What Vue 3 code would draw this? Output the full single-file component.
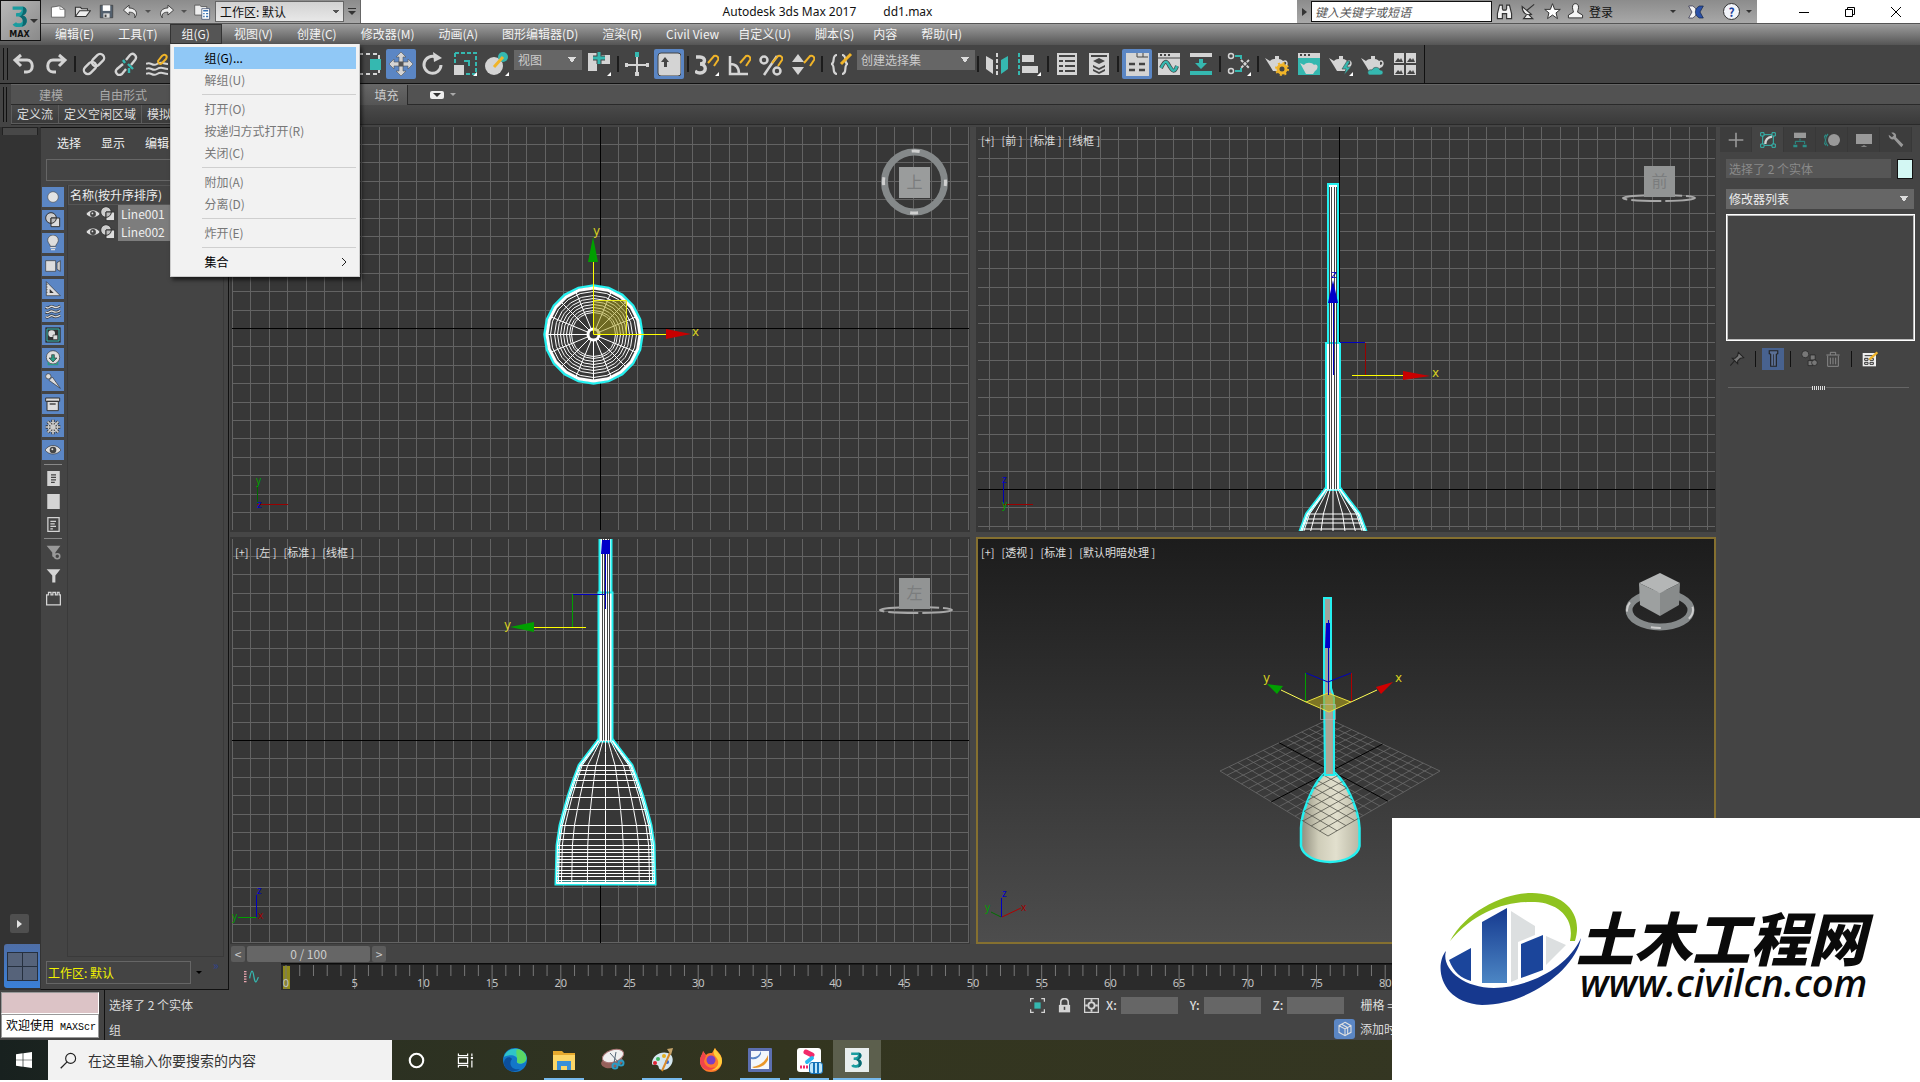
<script setup>
import { h, ref } from 'vue'

const L = '#d4d4d4'
const T = '#35b8b0'
const Y = '#f0b429'
const magnet = `<path d="M13 11l6-7a3 3 0 0 1 4 4l-4 6" fill="none" stroke="${Y}" stroke-width="2"/>`
const teapot = `<path d="M0 6l5 3c2-3 11-3 13 0 5-3 7 5 1 7l-3 3H8L5 14z" fill="${L}"/><path d="M10 4h4v3h-4z" fill="${L}"/><path d="M19 10c3-1 3 3 0 3z" fill="#444"/>`
const corner = `<path d="M24 20v4h-4z" fill="#fff"/>`

const icons = {
  undo: `<path d="M9 3L3 8l6 6M4 8h11c7 0 7 12 0 12h-3" fill="none" stroke="${L}" stroke-width="3"/>`,
  redo: `<path d="M15 3l6 5-6 6M20 8H9c-7 0-7 12 0 12h3" fill="none" stroke="${L}" stroke-width="3"/>`,
  link: `<g fill="none" stroke="${L}" stroke-width="2.4"><rect x="9" y="4" width="14" height="8" rx="4" transform="rotate(-45 16 8)"/><rect x="1" y="12" width="14" height="8" rx="4" transform="rotate(-45 8 16)"/></g>`,
  unlink: `<g fill="none" stroke="${L}" stroke-width="2.4"><path d="M12 8l4-5c3-3 8 1 5 5l-4 5M9 12l-6 5c-3 3 1 8 5 5l4-5"/><path d="M9 8l2 3M14 12l5 5M15 16v5" stroke="${T}"/></g>`,
  bind: `<path d="M0 12c5-3 6 3 11 0s6 0 11 0M0 17c5-3 6 3 11 0s6 0 11 0M0 22c5-3 6 3 11 0s6 0 11 0" fill="none" stroke="${L}" stroke-width="2"/><path d="M12 9l4-5c3-3 6 0 4 3l-4 4c-2 2-4 0-4-2z" fill="none" stroke="${Y}" stroke-width="2"/>`,
  windowSel: `<path d="M2 2h20v20H2z" fill="none" stroke="${L}" stroke-width="2" stroke-dasharray="4 3"/><path d="M13 7h11v11H13z" fill="${T}"/>`,
  move: `<path d="M12 0l5 5h-3v5h5V7l5 5-5 5v-3h-5v5h3l-5 5-5-5h3v-5H5v3l-5-5 5-5v3h5V5H7z" fill="${L}" stroke="#555" stroke-width=".6"/><rect x="9.5" y="9.5" width="5" height="5" fill="#555"/>`,
  rotate: `<path d="M15 5a8.500 8.500 0 1 0 5 8" fill="none" stroke="${L}" stroke-width="3"/><path d="M12 0l9 6-8 4z" fill="${L}"/>`,
  scale: `<path d="M2 1h21v21H12M2 1v11" fill="none" stroke="${T}" stroke-width="2" stroke-dasharray="4 2"/><path d="M11 9h5v5" fill="none" stroke="${T}" stroke-width="2"/><path d="M1 13h10v10H1z" fill="${L}"/>${corner}`,
  place: `<ellipse cx="9" cy="14" rx="9" ry="9" fill="${L}"/><circle cx="18" cy="5" r="5" fill="${T}"/><path d="M9 15l9-10" stroke="${Y}" stroke-width="3"/>${corner}`,
  pivot: `<path d="M1 1h9v18H1zM12 3h11v9H12z" fill="${L}"/><path d="M12 0v12M6 6h12" stroke="#444" stroke-width="5"/><path d="M12 0v12M6 6h12" stroke="${T}" stroke-width="3"/>${corner}`,
  manip: `<path d="M12 3v20M1 13h22" stroke="${L}" stroke-width="2"/><path d="M10 0h4v5h-4z" fill="${T}"/><path d="M0 11h3v4H0zM21 11h3v4h-3zM10 20h4v4h-4z" fill="${L}"/>`,
  keyboard: `<rect x="1" y="1" width="23" height="23" rx="3" fill="${L}" stroke="#444"/><path d="M8 5l4 5h-2v5H7v-5H4z" fill="#444"/>`,
  snap: `<path d="M1 5h4c6 0 6 7 0 7 7 0 7 9 0 9-2 0-4-1-5-2" fill="none" stroke="${L}" stroke-width="3.4"/>${magnet}${corner}`,
  angle: `<path d="M3 4v18h18M3 12c6 0 9 4 9 10" fill="none" stroke="${L}" stroke-width="2.5"/>${magnet}`,
  percent: `<g fill="none" stroke="${L}" stroke-width="2.5"><circle cx="5" cy="8" r="3.5"/><circle cx="18" cy="19" r="3.5"/><path d="M18 4L5 23"/></g>${magnet}`,
  spinner: `<path d="M7 2l6 8H1zM7 23l6-8H1z" fill="${L}"/>${magnet}`,
  named: `<path d="M8 3c-6 0-1 9-6 9 5 0 0 10 6 10M13 3c6 0 1 9 6 9-5 0 0 10-6 10" fill="none" stroke="${L}" stroke-width="2.2"/><path d="M12 12L22 2" stroke="${Y}" stroke-width="3"/>`,
  mirror: `<path d="M1 4l7 4v14l-7-5z" fill="${L}"/><path d="M23 4l-7 4v14l7-5z" fill="${T}"/><path d="M12 1v23" stroke="${L}" stroke-width="2" stroke-dasharray="4 2"/>`,
  align: `<path d="M2 1v23" stroke="${T}" stroke-width="2" stroke-dasharray="4 2"/><path d="M5 3h12v7H5zM5 14h16v7H5z" fill="${L}"/>${corner}`,
  layers: `<path d="M2 1h20v22H2z" fill="${L}"/><path d="M4 4h16M4 9h4M10 9h10M4 14h4M10 14h10M4 19h4M10 19h10" stroke="#444" stroke-width="2"/>`,
  stack: `<path d="M2 1h20v22H2z" fill="${L}"/><path d="M4 4h16" stroke="#444" stroke-width="2"/><path d="M6 9l6-3 6 3-6 3zM6 13l6 3 6-3v2l-6 3-6-3zM6 17l6 3 6-3v2l-6 3-6-3z" fill="#444"/>`,
  ribbon: `<path d="M1 1h23v23H1z" fill="${L}"/><path d="M12 1v4h11M18 1v4" stroke="#444" fill="none"/><path d="M4 12h6M14 12h6M4 18h6M14 18h6" stroke="#444" stroke-width="2.5"/>`,
  curve: `<path d="M1 1h22v22H1z" fill="${L}"/><path d="M1 6h22" stroke="#444"/><path d="M3 3h2M7 3h2M11 3h2" stroke="#444" stroke-width="2"/><path d="M4 16c5-10 6-6 9-1s5 5 7-1" fill="none" stroke="#444" stroke-width="4"/><path d="M4 16c5-10 6-6 9-1s5 5 7-1" fill="none" stroke="${T}" stroke-width="2.5"/>`,
  dope: `<path d="M1 1h22v4H1z" fill="${L}"/><path d="M1 19h22v4H1z" fill="${T}"/><path d="M10 7h4v4h4l-6 6-6-6h4z" fill="${T}"/>`,
  schematic: `<g fill="none" stroke="${L}" stroke-width="1.5"><circle cx="4" cy="4" r="2.5"/><circle cx="4" cy="19" r="2.5"/></g><path d="M8 4h6v3M8 19h6v-3" fill="none" stroke="${T}" stroke-width="2"/><path d="M14 8l8 8M22 8l-8 8" stroke="${L}" stroke-width="2" stroke-dasharray="3 1"/>${corner}`,
  renderSetup: `${teapot}<circle cx="17" cy="17" r="4" fill="#444" stroke="${Y}" stroke-width="3"/><circle cx="17" cy="17" r="6" fill="none" stroke="${Y}" stroke-width="2" stroke-dasharray="2 2.7"/>`,
  frame: `<path d="M1 1h22v22H1z" fill="${T}"/><path d="M1 1h22v5H1z" fill="${L}"/><path d="M3 3h2M7 3h2M11 3h2" stroke="#444" stroke-width="2"/><path d="M3 11l4 2c2-3 8-3 10 0 4-2 5 4 1 6l-2 3H9z" fill="${L}"/>`,
  render: `${teapot}<path d="M18 9l-5 8h4l-2 6 7-8h-4l3-6z" fill="${T}" stroke="#444" stroke-width=".6"/>${corner}`,
  cloud: `${teapot}<path d="M8 23c-3-3 0-6 3-5 2-4 7-3 8 0 4 0 4 5 0 5z" fill="${T}" stroke="#444" stroke-width=".6"/>`,
  gallery: `<path d="M1 1h10v10H1zM13 1h10v10H13zM1 13h10v10H1zM13 13h10v10H13z" fill="${L}"/><path d="M2 10l3-4 2 2 1-2 2 4zM14 10l3-4 2 2 1-2 2 4zM2 22l3-4 2 2 1-2 2 4zM14 22l3-4 2 2 1-2 2 4z" fill="#444"/>`,
  file: `<path d="M2 6l12-2 7 5v11H2z" fill="#fff" stroke="#444"/><path d="M14 4v5h7" fill="none" stroke="#777"/>`,
  open: `<path d="M2 19V6h7l2 2h8v3" fill="#ddd" stroke="#333" stroke-width="1.5"/><path d="M2 19l6-8h15l-6 8z" fill="#eee" stroke="#333" stroke-width="1.5"/>`,
  save: `<path d="M2 2h20v20H2z" fill="#53606e" stroke="#333"/><path d="M6 2h12v9H6z" fill="#fff"/><path d="M7 15h10v7H7z" fill="#ddd"/><path d="M9 17h3v4H9z" fill="#444"/>`,
  back: `<path d="M10 3L2 10l8 7v-4c5 0 9 1 8 8 6-8 0-14-8-14z" fill="#eee" stroke="#333" stroke-width="1.2"/>`,
  fwd: `<path d="M14 3l8 7-8 7v-4c-5 0-9 1-8 8-6-8 0-14 8-14z" fill="#eee" stroke="#333" stroke-width="1.2"/>`,
  project: `<path d="M1 3h7l2 2h8v12H1z" fill="#eee" stroke="#444"/><path d="M11 8h11v15H11z" fill="#fff" stroke="#346"/><path d="M13 11h7M13 15h2M17 15h3M13 19h2M17 19h3" stroke="#3471b5" stroke-width="2"/>`,
  bino: `<path d="M5 3h4v5l1 2h4l1-2V3h4l3 12v7h-7v-7h-6v7H2v-7z" fill="#f2f2f2" stroke="#333" stroke-width="1.6"/>`,
  dish: `<path d="M3 5c0 9 6 13 13 11zM9 11l11-9M9 17l-4 5h13l-5-5" fill="#f2f2f2" stroke="#333" stroke-width="1.6"/>`,
  star: `<path d="M12 1l3 8h8l-6 5 2 8-7-5-7 5 2-8-6-5h8z" fill="#fff" stroke="#333" stroke-width="1.4"/>`,
  user: `<path d="M8 4c1-4 7-4 8 0 1 4-1 6-1 9l7 4v4H2v-4l7-4c0-3-2-5-1-9z" fill="#f5f5f5" stroke="#333" stroke-width="1.4"/>`,
  exchange: `<path d="M1 3h6c4 2 6 6 6 9s-2 7-6 9H1l5-9z" fill="#f5f5f5" stroke="#224"/><path d="M23 3h-6c-4 2-6 6-6 9s2 7 6 9h6l-5-9z" fill="#2a50a8" stroke="#124"/>`,
  geo: `<circle cx="12" cy="12" r="8" fill="#e4e4e4" stroke="#555"/>`,
  shapes: `<circle cx="9" cy="9" r="8" fill="#ccc" stroke="#333" stroke-width="1.5"/><path d="M9 9h13v13H9z" fill="#ddd" stroke="#333" stroke-width="1.5"/><path d="M9 17a8 8 0 0 0 8-8H9z" fill="#bbb" stroke="#333" stroke-width="1.5"/>`,
  bulb: `<path d="M8 17c0-3-4-5-4-9a8 8 0 0 1 16 0c0 4-4 6-4 9z" fill="#ddd" stroke="#444"/><path d="M8 19h8M9 22h6" stroke="#ddd" stroke-width="2"/>`,
  camera: `<path d="M1 4h15v16H1z" fill="#ddd" stroke="#333"/><path d="M18 7l5-3v16l-5-3z" fill="#ccc" stroke="#333"/>`,
  helper: `<path d="M2 1v21h21z" fill="#ddd" stroke="#333"/><path d="M7 12v6h6z" fill="#333"/><path d="M2 5h2M2 9h2M2 13h2M2 17h2" stroke="#333"/>`,
  waves: `<path d="M1 5c5 4 6-4 11-1s6 1 11-1M1 12c5 4 6-4 11-1s6 1 11-1M1 19c5 4 6-4 11-1s6 1 11-1" fill="none" stroke="#333" stroke-width="4"/><path d="M1 5c5 4 6-4 11-1s6 1 11-1M1 12c5 4 6-4 11-1s6 1 11-1M1 19c5 4 6-4 11-1s6 1 11-1" fill="none" stroke="#ddd" stroke-width="2"/>`,
  group: `<path d="M1 1h22v22H1z" fill="#333" stroke="#333"/><path d="M3 3h18v18H3z" fill="none" stroke="${T}" stroke-width="1.5"/><circle cx="10" cy="10" r="5" fill="#ddd"/><path d="M12 12h7v7h-7z" fill="#ddd" stroke="#333"/>`,
  xref: `<circle cx="12" cy="11" r="10" fill="#ddd" stroke="#333"/><path d="M10 7h4v5h4l-6 6-6-6h4z" fill="#2b9c84" stroke="#333"/><path d="M5 18v4h14v-4" fill="none" stroke="#2b9c84" stroke-width="2"/>`,
  bone: `<circle cx="5" cy="5" r="4" fill="#ddd" stroke="#333"/><path d="M6 11l5-5 12 17z" fill="#ddd" stroke="#333"/>`,
  container: `<path d="M1 3h21v5H1zM3 8h17v14H3z" fill="#ddd" stroke="#333" stroke-width="1.5"/><path d="M7 12h9" stroke="#333" stroke-width="2"/>`,
  frozen: `<path d="M12 1v22M1 12h22M4 4l16 16M20 4L4 20" stroke="#333" stroke-width="5"/><path d="M12 1v22M1 12h22M4 4l16 16M20 4L4 20" stroke="#ccc" stroke-width="2.4"/><circle cx="12" cy="12" r="7" fill="none" stroke="#ccc" stroke-width="2"/>`,
  eye: `<path d="M0 12c6-9 18-9 24 0-6 8-18 8-24 0z" fill="#ddd" stroke="#333"/><circle cx="12" cy="12" r="5" fill="#444"/><circle cx="11" cy="11" r="1.5" fill="#ddd"/>`,
  doc: `<path d="M2 0h20v24H2z" fill="${L}"/><path d="M8 6h8M8 10h8M8 14h8M8 18h6" stroke="#444" stroke-width="2"/>`,
  blank: `<path d="M2 0h20v24H2z" fill="${L}"/>`,
  docLine: `<path d="M3 1h18v22H3z" fill="none" stroke="${L}" stroke-width="2"/><path d="M7 7h9M7 11h7M7 15h9M7 19h4" stroke="${L}" stroke-width="2"/>`,
  funnelGear: `<path d="M1 1h22l-8 11v10l-5-4v-6z" fill="#999"/><circle cx="18" cy="18" r="4" fill="#444" stroke="#999" stroke-width="2.5"/>`,
  funnel: `<path d="M1 2h22l-8 10v11h-5V12z" fill="${L}"/>`,
  brick: `<path d="M1 6h3V2h4v4h3V2h4v4h3V2h3v4h2v16H1z" fill="none" stroke="${L}" stroke-width="2"/>`,
  plus: `<path d="M12 1v22M1 12h22" stroke="#999" stroke-width="2.4"/>`,
  modify: `<path d="M4 4h16v16H4z" fill="none" stroke="${T}" stroke-width="1.5"/><path d="M1 1h5v5H1zM18 1h5v5h-5zM1 18h5v5H1zM18 18h5v5h-5z" fill="#444" stroke="${T}" stroke-width="1.5"/><path d="M8 18c0-7 4-10 10-11" fill="none" stroke="${L}" stroke-width="3.5"/>`,
  hierarchy: `<path d="M3 1h18v8H3z" fill="#999"/><path d="M12 10v3M5 18v-4h14v4" fill="none" stroke="#2b8f88" stroke-width="1.5"/><path d="M2 19h6v4H2zM16 19h6v4h-6z" fill="#2b8f88"/>`,
  motion: `<circle cx="15" cy="12" r="9" fill="#999"/><path d="M6 3c-5 5-5 13 0 18M3 4c-5 5-5 11 0 16" fill="none" stroke="#2b8f88" stroke-width="1.6"/>`,
  display: `<path d="M0 3h24v15H0zM7 22l5-2 5 2z" fill="#999"/>`,
  wrench: `<path d="M1 4l5 4 3-3-4-4c6-1 8 3 7 7l11 11-3 4L9 11C5 12 1 9 1 4z" fill="#999"/>`,
  pin: `<path d="M14 2l8 8-5 1-4 4 0 4-8-8h4l4-4zM8 15l-6 7" fill="#777" stroke="#222" stroke-width="1.6"/>`,
  tube: `<path d="M6 1h12v4l-2 1v17H8V6L6 5z" fill="#5a6f95" stroke="#222" stroke-width="1.6"/><path d="M12 6v16" stroke="#222"/>`,
  unique: `<g fill="#777" stroke="#222"><circle cx="6" cy="6" r="5"/><path d="M13 7h7v7h-7zM10 15h7v7h-7z"/><circle cx="19" cy="18" r="4"/></g>`,
  trash: `<path d="M2 6h20M8 6V2h8v4M4 7v16h16V7M8 10v10M12 10v10M16 10v10" fill="none" stroke="#888" stroke-width="1.5"/>`,
  config: `<path d="M1 3h20v20H1z" fill="#eee"/><path d="M4 7h14M4 11h5v3H4zM12 11h5v3h-5zM4 17h5v3H4zM12 17h5v3h-5z" fill="none" stroke="#333" stroke-width="1.5"/><path d="M11 13L23 2" stroke="${Y}" stroke-width="3.5"/>`,
  isolate: `<path d="M1 6V1h5M18 1h5v5M23 18v5h-5M6 23H1v-5" fill="none" stroke="${L}" stroke-width="2"/><path d="M7 7h10v10H7z" fill="${T}"/>`,
  lock: `<path d="M6 11V7c0-8 12-8 12 0v4" fill="none" stroke="${L}" stroke-width="2.5"/><path d="M3 11h18v12H3z" fill="${L}"/><path d="M12 14v5" stroke="#444" stroke-width="2.5"/>`,
  abs: `<path d="M1 1h22v22H1z" fill="none" stroke="${L}" stroke-width="2"/><circle cx="12" cy="12" r="5" fill="none" stroke="${L}" stroke-width="3"/><path d="M12 2v4M12 18v4M2 12h4M18 12h4" stroke="${L}" stroke-width="3"/>`,
  cube: `<path d="M12 2l9 5v10l-9 5-9-5V7zM3 7l9 5 9-5M12 12v10M7 5l9 5v9" fill="none" stroke="#e0e0e0" stroke-width="1.6"/>`,
  miniCurve: `<path d="M2 3v19" stroke="#e9a6b0" stroke-width="4" stroke-dasharray="2 2"/><path d="M9 15c3-16 5-14 7-2s4 8 7 0" fill="none" stroke="${T}" stroke-width="2"/>`,
  win: `<path d="M0 3.5l10-1.5v9.5H0zM11 2l13-2v11.5H11zM0 12.5h10V22L0 20.5zM11 12.5h13V24l-13-2z" fill="#fff"/>`,
  search: `<circle cx="15" cy="9" r="7" fill="none" stroke="#222" stroke-width="1.6"/><path d="M10 14l-9 9" stroke="#222" stroke-width="1.8"/>`,
  cortana: `<circle cx="12" cy="12" r="9.5" fill="none" stroke="#fff" stroke-width="3"/>`,
  taskview: `<path d="M2 2v3h13V2M2 22v-3h13v3M2 8h13v8H2zM21 2v4M21 12v10" fill="none" stroke="#fff" stroke-width="1.7"/><path d="M19.5 7h3v3h-3z" fill="#fff"/>`,
  edge: `<circle cx="12" cy="12" r="12" fill="#1377c9"/><path d="M1 9C3 1 12-1 18 2c6 3 7 9 4 12-3 3-9 2-8-1 2-5-6-8-13-4z" fill="#2fc4c9"/><path d="M14 1c7 1 10 7 9 11-2 5-10 4-9 1 1-4-2-8 0-12z" fill="#5bd864"/><path d="M9 11c-4 5 0 12 8 10-6 5-17 1-16-7 1-5 6-6 8-3z" fill="#0c4f9c"/>`,
  folder: `<path d="M1 3h9l2 2h11v17H1z" fill="#e6a92e"/><path d="M1 7h22v15H1z" fill="#fcd667"/><path d="M5 22v-9h14v9h-4v-4H9v4z" fill="#3a8fd9"/>`,
  snip: `<ellipse cx="11" cy="14" rx="11" ry="6" fill="#96605a" transform="rotate(-12 11 14)"/><ellipse cx="12" cy="8" rx="11" ry="6" fill="#f0f0f0" stroke="#a77" transform="rotate(-18 12 8)"/><path d="M9 5l9 10M15 4l-2 11" stroke="#567"/><g fill="none" stroke="#2b9bc4" stroke-width="2"><circle cx="14" cy="18" r="2.5"/><circle cx="20" cy="15" r="2.5"/></g>`,
  paint: `<path d="M2 15C2 7 14 1 21 7c5 6-2 16-9 15-5-1-2-4-5-5s-5 1-5-2z" fill="#d5e7f0"/><circle cx="8" cy="11" r="2" fill="#3db45e"/><circle cx="14" cy="8" r="2" fill="#e4b020"/><circle cx="5" cy="15" r="2" fill="#d23"/><circle cx="17" cy="14" r="2" fill="#36c"/><path d="M12 23L20 5" stroke="#d98c2b" stroke-width="2"/><path d="M17 1l6-1-2 7z" fill="#c8a66c"/>`,
  firefox: `<path d="M12 24C5 24 1 19 1 13 1 8 4 6 4 3l3 4c2-2 4-2 6-2l3-5c1 3 7 5 7 13 0 6-4 11-11 11z" fill="#ff7a2b"/><path d="M16 0c1 4 7 6 7 13 0 5-5 10-11 9 6-1 10-7 5-13-3-3-3-6-1-9z" fill="#ffce3a"/><path d="M4 3l3 5-2 5c1 6 7 8 11 6-3 5-15 4-15-6 0-5 3-7 3-10z" fill="#f0444d"/><circle cx="12" cy="12" r="4.5" fill="#7b3fc4"/>`,
  viewer: `<rect width="24" height="24" rx="1" fill="#5c6fb0"/><path d="M3 3h18v18H3z" fill="#f4f7fb"/><path d="M4 19c8-1 13-5 16-12v5c-3 6-8 8-14 8z" fill="#e8962a"/><path d="M3 9c5 1 8-1 10-6v3c-2 4-5 6-10 5z" fill="#5b86c6"/>`,
  youku: `<rect width="24" height="24" rx="3" fill="#fff"/><path d="M9 4l6 3" stroke="#f22a6a" stroke-width="5" stroke-linecap="round"/><path d="M10 14l5-4" stroke="#2ab8f2" stroke-width="4" stroke-linecap="round"/><path d="M3 19h8" stroke="#f22a6a" stroke-width="3" stroke-dasharray="2 1"/>`,
  max: `<path d="M5 3h9c5 1 4 7 0 8 5 1 5 9-1 10-4 1-7 0-8-2l3-2c2 2 6 1 6-2s-3-3-6-3V9c4 0 5-1 5-3H5z" fill="#1a9c9f"/><path d="M14 3c5 1 4 7 0 8 5 1 5 9-1 10 2-3 2-7-2-9 3-1 4-5 3-9z" fill="#0c6870"/>`
}

const Ico = (p) => h('svg', { viewBox: '0 0 24 24', width: p.s || 24, height: p.s || 24, 'aria-hidden': 'true', innerHTML: icons[p.n] })
Ico.props = ['n', 's']

const menus = ['编辑(E)', '工具(T)', '组(G)', '视图(V)', '创建(C)', '修改器(M)', '动画(A)', '图形编辑器(D)', '渲染(R)', 'Civil View', '自定义(U)', '脚本(S)', '内容', '帮助(H)']
const groupMenu = [['组(G)...', '解组(U)'], ['打开(O)', '按递归方式打开(R)', '关闭(C)'], ['附加(A)', '分离(D)'], ['炸开(E)'], ['集合']]

const barA = ['undo', 'redo', '|', 'link', 'unlink', 'bind']
const barB = ['windowSel', 'move', 'rotate', 'scale', 'place']
const barC = ['pivot', '|', 'manip', 'keyboard', '|', 'snap', 'angle', 'percent', 'spinner', '|', 'named']
const barD = ['|', 'mirror', 'align', '|', 'layers', 'stack', '|', 'ribbon', 'curve', 'dope', '|', 'schematic', '|', 'renderSetup', 'frame', 'render', 'cloud', 'gallery']
const active = ['move', 'keyboard', 'ribbon']

const filters = ['geo', 'shapes', 'bulb', 'camera', 'helper', 'waves', 'group', 'xref', 'bone', 'container', 'frozen', 'eye']
const tools = ['doc', 'blank', 'docLine', '|', 'funnelGear', 'funnel', 'brick']
const tabs = ['plus', 'modify', 'hierarchy', 'motion', 'display', 'wrench']
const apps = [
  { n: 'edge', run: false }, { n: 'folder', run: true }, { n: 'snip', run: false }, { n: 'paint', run: true },
  { n: 'firefox', run: false }, { n: 'viewer', run: true }, { n: 'youku', run: true }, { n: 'max', run: true, on: true }
]
const coords = ['X', 'Y', 'Z']
const activeMenu = ref('组(G)')

// Background grid of an orthographic viewport, aligned on its world origin.
const STEP = 18.4
function grid(x0, y0, x1, y1, ox, oy) {
  let d = ''
  for (let i = Math.ceil((x0 - ox) / STEP); ox + i * STEP < x1; i++) if (i) d += `M${Math.round(ox + i * STEP) + 0.5} ${y0}V${y1}`
  for (let j = Math.ceil((y0 - oy) / STEP); oy + j * STEP < y1; j++) if (j) d += `M${x0} ${Math.round(oy + j * STEP) + 0.5}H${x1}`
  return d
}
const gridTop = grid(232, 127, 969, 530, 600, 328)
const gridFront = grid(978, 127, 1715, 530, 1339, 489)
const gridLeft = grid(232, 539, 969, 943, 600, 740)

// Bell of the brush: half width by distance below the neck.
const prof = [[7, 0], [16, 12], [26, 25], [32, 41], [37, 56], [41, 70], [45, 85], [48, 105], [49, 143]]
const half = (y) => {
  const i = Math.max(1, prof.findIndex((p) => p[1] >= y))
  const [a, b] = [prof[i - 1], prof[i]]
  return a[0] + ((b[0] - a[0]) * (y - a[1])) / (b[1] - a[1])
}
const bell = 'M' + prof.map((p) => p.join(' ')).join('L') + 'L' + [...prof].reverse().map((p) => `${-p[0]} ${p[1]}`).join('L') + 'Z'
const rings = [25, 30, 34, 40, 47, 57, 69, 85, 93, 99, 105, 109, 112, 116, 119, 122, 126, 130, 133, 136, 140, 142]
  .map((y) => `M${-half(y)} ${y}H${half(y)}`).join('')
const meridians = [-0.96, -0.9, -0.69, -0.37, 0, 0.37, 0.69, 0.9, 0.96].map((k) => 'M' + prof.map((p) => `${p[0] * k} ${p[1]}`).join('L')).join('')

// Top view of the bell
const spokes = Array.from({ length: 16 }, (_, i) => {
  const a = (i * Math.PI) / 8
  return `M${Math.cos(a) * 6} ${Math.sin(a) * 6}L${Math.cos(a) * 47} ${Math.sin(a) * 47}`
}).join('')
const poly = (r) => Array.from({ length: 20 }, (_, i) => `${Math.cos((i * Math.PI) / 10) * r},${Math.sin((i * Math.PI) / 10) * r}`).join(' ')
const radii = [22, 24, 27, 30, 33, 36, 39, 43]

// Ground plane in perspective
const Lp = [1220, 771], Tp = [1329, 719], Rp = [1440, 771], Bp = [1328, 836]
const mix = (a, b, t) => [a[0] + (b[0] - a[0]) * t, a[1] + (b[1] - a[1]) * t]
const ease = (u, k) => u + k * u * (1 - u)
let ground = '', groundAxis = ''
for (let i = 0; i <= 14; i++) {
  const u = i / 14
  const one = `M${mix(Lp, Tp, ease(u, 0.17))}L${mix(Bp, Rp, ease(u, 0.14))}`
  const two = `M${mix(Tp, Rp, ease(u, -0.07))}L${mix(Lp, Bp, ease(u, -0.1))}`
  if (i === 7) groundAxis = one + two
  else ground += one + two
}
const brush = 'M1325 773C1312 784 1301 815 1301 828V846C1303 856 1316 862 1330 862S1358 856 1359.500 846V828C1359 812 1348 784 1335 773Z'

const tick = (n) => 286 + n * 13.74
const LAST_LABEL = 80
</script>

<template>
  <div class="app">
    <header class="head">
      <button class="logo" aria-label="MAX"><Ico n="max" :s="27" /><b>MAX</b><i class="caret"></i></button>
      <div class="headrows">
        <div class="title">
          <div class="qat">
            <button aria-label="新建"><Ico n="file" :s="17" /></button>
            <button aria-label="打开"><Ico n="open" :s="17" /></button>
            <button aria-label="保存"><Ico n="save" :s="15" /></button>
            <button aria-label="撤消"><Ico n="back" :s="17" /></button><i class="caret sm"></i>
            <button aria-label="重做"><Ico n="fwd" :s="17" /></button><i class="caret sm"></i>
            <button aria-label="项目"><Ico n="project" :s="17" /></button>
            <select class="ws" aria-label="工作区"><option>工作区: 默认</option></select>
            <span class="more"><i class="caret"></i></span>
          </div>
          <h1><span>Autodesk 3ds Max 2017</span><span>dd1.max</span></h1>
          <div class="info">
            <button class="expand" aria-label="展开"><i></i></button>
            <input placeholder="键入关键字或短语" aria-label="搜索帮助" />
            <button aria-label="查找"><Ico n="bino" :s="17" /></button>
            <button aria-label="通讯"><Ico n="dish" :s="17" /></button>
            <button aria-label="收藏"><Ico n="star" :s="17" /></button>
            <button class="login"><Ico n="user" :s="17" /><span>登录</span></button>
            <i class="caret sm"></i>
            <button class="ex" aria-label="Exchange"><Ico n="exchange" :s="16" /></button>
            <button class="help" aria-label="帮助">?</button><i class="caret sm"></i>
          </div>
          <div class="winbtns">
            <button aria-label="最小化"><svg width="12" height="12"><path d="M1 6.500h10" stroke="#000" /></svg></button>
            <button aria-label="还原"><svg width="12" height="12"><path d="M1.500 3.500h7v7h-7zM3.500 3.500v-2h7v7h-2" fill="none" stroke="#000" /></svg></button>
            <button aria-label="关闭"><svg width="12" height="12"><path d="M1 1l10 10M11 1L1 11" stroke="#000" /></svg></button>
          </div>
        </div>
        <nav class="menubar">
          <div v-for="m in menus" :key="m" class="mi" :class="{ tight: m === 'Civil View' || m === '脚本(S)' }">
            <button :class="{ open: m === activeMenu }" @click="activeMenu = m">{{ m }}</button>
            <div v-if="m === '组(G)' && activeMenu === m" class="drop">
              <div v-for="(g, gi) in groupMenu" :key="gi" class="sec">
                <button v-for="t in g" :key="t" :disabled="gi + g.indexOf(t) > 0 && t !== '集合'" :class="{ hot: t === '组(G)...' }">
                  {{ t }}<svg v-if="t === '集合'" width="6" height="10"><path d="M1 1l4 4-4 4" fill="none" stroke="#222" /></svg>
                </button>
              </div>
            </div>
          </div>
        </nav>
      </div>
    </header>

    <div class="toolbar">
      <div class="tools">
        <i class="grip"></i>
        <template v-for="(b, i) in barA" :key="'a' + i"><i v-if="b === '|'" class="sep"></i><button v-else class="tb" :aria-label="b"><Ico :n="b" /></button></template>
        <span class="gap"></span>
        <button v-for="b in barB" :key="b" class="tb" :class="{ on: active.includes(b) }" :aria-label="b"><Ico :n="b" /></button>
        <select class="dd coord" aria-label="参考坐标系"><option>视图</option></select>
        <template v-for="(b, i) in barC" :key="'c' + i"><i v-if="b === '|'" class="sep"></i><button v-else class="tb" :class="{ on: active.includes(b) }" :aria-label="b"><Ico :n="b" /></button></template>
        <select class="dd set" aria-label="选择集"><option>创建选择集</option></select>
        <template v-for="(b, i) in barD" :key="'d' + i"><i v-if="b === '|'" class="sep"></i><button v-else class="tb" :class="{ on: active.includes(b) }" :aria-label="b"><Ico :n="b" /></button></template>
      </div>
    </div>

    <div class="ribbon">
      <i class="grip"></i>
      <div class="rrows">
        <div class="rtabs">
          <button class="t1">建模</button><button class="t2">自由形式</button>
          <button class="t3">填充</button>
          <button class="pill" aria-label="最小化功能区"><i class="caret"></i></button><i class="caret lt"></i>
        </div>
        <div class="rbtns"><button>定义流</button><button>定义空闲区域</button><button>模拟</button></div>
      </div>
    </div>

    <main class="main">
      <aside class="strip">
        <i class="stub"></i>
        <button class="play" aria-label="展开"><i></i></button>
        <button class="layout" aria-label="视口布局"><i></i><i></i><i></i><i></i></button>
      </aside>

      <section class="explorer">
        <nav><button>选择</button><button>显示</button><button>编辑</button></nav>
        <input class="find" aria-label="查找对象" />
        <div class="exbody">
          <div class="filters">
            <button v-for="f in filters" :key="f" class="f on" :aria-label="f"><Ico :n="f" :s="16" /></button>
            <i class="hr"></i>
            <template v-for="t in tools" :key="t"><i v-if="t === '|'" class="hr"></i><button v-else class="f" :aria-label="t"><Ico :n="t" :s="15" /></button></template>
          </div>
          <div class="tree">
            <h2>名称(按升序排序)</h2>
            <ul>
              <li v-for="n in ['Line001', 'Line002']" :key="n"><Ico n="eye" :s="14" /><Ico n="shapes" :s="16" /><span>{{ n }}</span></li>
            </ul>
          </div>
        </div>
        <div class="wsrow"><input value="工作区: 默认" aria-label="工作区" /><i class="caret"></i><span>»</span></div>
      </section>

      <section class="center">
        <div class="views">
          <div class="vp">
            <svg viewBox="230 127 740 405">
              <path :d="gridTop" stroke="#636363" />
              <path d="M600.500 127V530M232 328.500H969" stroke="#000" />
              <g transform="translate(593.500 334.500)" fill="none" stroke="#fff">
                <polygon :points="poly(49)" stroke="#24f0f0" stroke-width="2.500" fill="#373737" />
                <polygon :points="poly(46.500)" stroke-width="3" />
                <polygon v-for="r in radii" :key="r" :points="poly(r)" />
                <path :d="spokes" />
                <circle r="5.500" stroke-width="3" />
              </g>
              <path d="M593.500 300.500h33v34h-33z" fill="#a69c10" fill-opacity=".5" stroke="#e8e820" />
              <path d="M593.500 334V262M594 334.500H666" stroke="#ff0" />
              <path d="M588 262h10l-5-25z" fill="#00a000" /><path d="M666 329v10l25-5z" fill="#c80000" />
              <text x="593" y="235" class="ax">y</text><text x="692" y="336" class="ax">x</text>
              <path d="M257.500 485v19" stroke="#060" /><path d="M257 504.500h31" stroke="#900" /><text x="256" y="484" class="tiny g">y</text><text x="257" y="508" class="tiny b">z</text>
              <g><circle cx="914.500" cy="182" r="30" fill="none" stroke="#85898a" stroke-width="7" /><circle cx="914.500" cy="182" r="31" fill="none" stroke="#d0d0d0" stroke-width="3" stroke-dasharray="8 41" stroke-dashoffset="4" /><rect x="899" y="167" width="31" height="31" fill="#9a9c9c" /><text x="914.500" y="188" class="cube">上</text></g>
            </svg>
          </div>
          <div class="vp">
            <div class="lab"><span>[+]</span><span>[前 ]</span><span>[标准 ]</span><span>[线框 ]</span></div>
            <svg viewBox="976 127 740 405">
              <clipPath id="frontClip"><path d="M976 127h740v404H976z" /></clipPath>
              <path :d="gridFront" stroke="#636363" />
              <path d="M1339.500 127V530M978 489.500H1715" stroke="#000" />
              <g clip-path="url(#frontClip)">
                <g transform="translate(1333 489)" stroke="#fff" fill="none">
                  <path :d="bell" fill="#373737" stroke="#24f0f0" stroke-width="4" /><path :d="bell + meridians + rings" />
                  <path d="M-5 0V-305H5V0" fill="#fff" stroke="#24f0f0" stroke-width="2" /><path d="M-7 0V-146H7V0" fill="#fff" stroke="#24f0f0" stroke-width="2" />
                  <path d="M-3.500 0V-302M-1.500 0V-302M1.500 0V-302M3.500 0V-302" stroke="#444" />
                </g>
              </g>
              <path d="M1333.500 375V300M1340 342.500h25" stroke="#0000c0" /><path d="M1328 303h10l-5-23z" fill="#0000c8" />
              <path d="M1365.500 343v32" stroke="#900" /><path d="M1352 375.500h52" stroke="#ff0" /><path d="M1403 371v9l27-4z" fill="#c80000" />
              <text x="1432" y="377" class="ax">x</text><text x="1331" y="278" class="ax b">z</text>
              <path d="M1003.500 483v21" stroke="#0000b0" /><path d="M1003 504.500h30" stroke="#900" /><text x="1002" y="483" class="tiny b">z</text><text x="1002" y="508" class="tiny g">y</text>
              <ellipse cx="1659" cy="198" rx="36" ry="3" fill="none" stroke="#a8a8a8" stroke-width="2" stroke-dasharray="30 4" /><rect x="1644" y="166" width="31" height="31" fill="#929494" /><text x="1659.500" y="187" class="cube">前</text>
            </svg>
          </div>
          <div class="vp">
            <div class="lab"><span>[+]</span><span>[左 ]</span><span>[标准 ]</span><span>[线框 ]</span></div>
            <svg viewBox="230 537 740 407">
              <clipPath id="leftClip"><path d="M230 539h740v405H230z" /></clipPath>
              <path :d="gridLeft" stroke="#636363" />
              <path d="M600.500 539V943M232 740.500H969" stroke="#000" />
              <g clip-path="url(#leftClip)">
                <g transform="translate(605.500 740.500)" stroke="#fff" fill="none">
                  <path :d="bell" fill="#373737" stroke="#24f0f0" stroke-width="4" /><path :d="bell + meridians + rings" />
                  <path d="M-6 0V-306H6V0" fill="#fff" stroke="#24f0f0" stroke-width="2" /><path d="M-7 0V-148H7V0" fill="#fff" stroke="#24f0f0" stroke-width="2" />
                  <path d="M-3 0V-220M-1 0V-220M2 0V-220M4 0V-220" stroke="#444" />
                </g>
                <path d="M605.500 609V540M572 594.500h33" stroke="#0000c0" /><path d="M601 554h9v-14h-8z" fill="#0000c8" />
              </g>
              <path d="M572.500 594v33" stroke="#00a000" /><path d="M534 627.500h52" stroke="#ff0" /><path d="M534 622v10l-24-5z" fill="#00a000" /><text x="504" y="629" class="ax">y</text>
              <path d="M238 917.500h18" stroke="#00a000" /><path d="M256.500 895v22" stroke="#0000c0" /><text x="232" y="920" class="tiny g">y</text><text x="257" y="894" class="tiny b">z</text><text x="258" y="919" class="tiny r">x</text>
              <ellipse cx="916" cy="610" rx="36" ry="3" fill="none" stroke="#a8a8a8" stroke-width="2" stroke-dasharray="30 4" /><rect x="899" y="578" width="31" height="31" fill="#929494" /><text x="914.500" y="599" class="cube">左</text>
            </svg>
          </div>
          <div class="vp">
            <div class="lab"><span>[+]</span><span>[透视 ]</span><span>[标准 ]</span><span>[默认明暗处理 ]</span></div>
            <svg viewBox="976 537 740 407">
              <defs>
                <linearGradient id="sky" x2="0" y2="1"><stop stop-color="#1c1c1c" /><stop offset="1" stop-color="#4d4d4d" /></linearGradient>
                <linearGradient id="body"><stop stop-color="#8f8d7d" /><stop offset=".3" stop-color="#cfcdb9" /><stop offset=".6" stop-color="#e2e0ce" /><stop offset="1" stop-color="#b9b7a4" /></linearGradient>
                <clipPath id="brushClip"><path :d="brush" /></clipPath>
              </defs>
              <rect x="977" y="538" width="738" height="405" fill="url(#sky)" stroke="#857030" stroke-width="2" />
              <path :d="ground" stroke="#6b6b6b" fill="none" stroke-width=".8" /><path :d="groundAxis" stroke="#000" />
              <path :d="brush" fill="url(#body)" stroke="#24f0f0" stroke-width="2.500" />
              <g clip-path="url(#brushClip)"><path :d="ground + groundAxis" stroke="#56564c" stroke-width=".8" /></g>
              <path d="M1324 693V598h7v90l3 10v77h-9z" fill="#9fa39d" stroke="#24f0f0" stroke-width="2" />
              <path d="M1326 693h6v81h-6z" fill="#aaa795" />
              <path d="M1306 702l22-9 23 9-22 10z" fill="#b0a41c" fill-opacity=".6" stroke="#e8e040" />
              <path d="M1305.500 702v-29" stroke="#00a000" /><path d="M1351.500 702v-29" stroke="#b00000" /><path d="M1306 673l22 9 23-9M1328.500 695V620" stroke="#0000c0" fill="none" /><path d="M1325 648h5v-25h-4z" fill="#0000c8" />
              <path d="M1306 702l-25-12M1351 702l26-12" stroke="#ff5" />
              <path d="M1267 684l16 2-6 8z" fill="#00a000" /><path d="M1393 682l-17 5 5 7z" fill="#d00000" />
              <text x="1263" y="682" class="ax">y</text><text x="1395" y="682" class="ax">x</text>
              <path d="M1320.500 704.500h15v15h-15z" fill="none" stroke="#bbb" stroke-opacity=".6" />
              <path d="M1001.500 898v19" stroke="#0000c0" /><path d="M1002 917l19-9" stroke="#b00000" /><path d="M1001 917l-10-5" stroke="#007000" /><text x="985" y="911" class="tiny g">y</text><text x="1002" y="897" class="tiny b">z</text><text x="1021" y="911" class="tiny r">x</text>
              <ellipse cx="1660" cy="610" rx="31" ry="17" fill="none" stroke="#85898a" stroke-width="7" /><ellipse cx="1660" cy="610" rx="33" ry="18" fill="none" stroke="#ccc" stroke-width="2" stroke-dasharray="10 30" />
              <path d="M1639 583l21-10 20 10-20 10z" fill="#b4b6b6" /><path d="M1639 583l21 10v23l-20-11z" fill="#9da0a0" /><path d="M1680 583l-20 10v23l19-11z" fill="#888b8b" />
            </svg>
          </div>
        </div>
        <div class="slider"><button aria-label="上一帧">&lt;</button><button class="thumb">0 / 100</button><button aria-label="下一帧">&gt;</button></div>
        <div class="timeline">
          <button aria-label="迷你曲线编辑器"><Ico n="miniCurve" :s="15" /></button>
          <svg viewBox="281 963 1439 27">
            <rect x="281" y="963" width="1439" height="27" fill="#2b2b2b" /><path d="M281 963.500h1439" stroke="#0c0c0c" stroke-width="2" />
            <rect x="283" y="966" width="7" height="23" fill="#8f8a1c" />
            <template v-for="n in 101" :key="n">
              <path :d="`M${tick(n - 1)} 965v${(n - 1) % 5 ? 11 : 24}`" stroke="#777" />
              <text v-if="(n - 1) % 5 === 0 && n - 1 <= LAST_LABEL" :x="tick(n - 1)" y="987" class="num">{{ n - 1 }}</text>
            </template>
          </svg>
        </div>
      </section>

      <aside class="panel">
        <div class="ptabs"><button v-for="t in tabs" :key="t" :class="{ on: t === 'modify' }" :aria-label="t"><Ico :n="t" :s="16" /></button></div>
        <div class="namerow"><input value="选择了 2 个实体" aria-label="名称" /><button aria-label="颜色"></button></div>
        <select class="modlist" aria-label="修改器列表"><option>修改器列表</option></select>
        <div class="stack"></div>
        <div class="stackbar">
          <button aria-label="锁定堆栈"><Ico n="pin" :s="16" /></button><i></i>
          <button class="on" aria-label="显示最终结果"><Ico n="tube" :s="17" /></button><i></i>
          <button aria-label="使唯一"><Ico n="unique" :s="17" /></button>
          <button aria-label="移除"><Ico n="trash" :s="16" /></button><i></i>
          <button aria-label="配置"><Ico n="config" :s="16" /></button>
        </div>
        <div class="roll"><i></i></div>
      </aside>
    </main>

    <div class="status">
      <div class="listener"><div class="pink"></div><div class="mono">欢迎使用<span> MAXScr</span></div></div>
      <div class="msgs"><p>选择了 2 个实体</p><p>组</p></div>
      <div class="xyz">
        <div class="xr">
          <button aria-label="隔离"><Ico n="isolate" :s="15" /></button><button aria-label="锁定"><Ico n="lock" :s="15" /></button><button aria-label="绝对模式"><Ico n="abs" :s="15" /></button>
          <label v-for="c in coords" :key="c">{{ c }}:<input /></label>
          <span class="gridsize">栅格 =</span>
        </div>
        <div class="xr two"><button class="on" aria-label="时间标记"><Ico n="cube" :s="16" /></button><span>添加时</span></div>
      </div>
    </div>

    <footer class="taskbar">
      <button class="start" aria-label="开始"><Ico n="win" :s="16" /></button>
      <label class="tsearch"><Ico n="search" :s="17" /><input placeholder="在这里输入你要搜索的内容" aria-label="搜索" /></label>
      <button class="app-i" aria-label="Cortana"><Ico n="cortana" :s="17" /></button>
      <button class="app-i" aria-label="任务视图"><Ico n="taskview" :s="17" /></button>
      <button v-for="a in apps" :key="a.n" class="app-i" :class="{ run: a.run, cur: a.on }" :aria-label="a.n"><span :class="{ tile: a.on }"><Ico :n="a.n" :s="a.on ? 20 : 24" /></span><em v-if="a.n === 'youku'"></em></button>
    </footer>

    <div class="mark">
      <svg viewBox="1440 892 142 114" width="142" height="114">
        <defs><linearGradient id="tower" x2="0" y2="1"><stop stop-color="#15398f" /><stop offset="1" stop-color="#4c86c4" /></linearGradient></defs>
        <path d="M1450 941C1467 910 1505 893 1532 893C1562 893 1584 912 1575 941L1570 941C1575 918 1558 903 1535 902C1505 901 1475 912 1450 941Z" fill="#8fc320" />
        <path d="M1446 951C1441 968 1462 988 1494 988C1530 987 1567 968 1581 938C1576 968 1529 1005 1482 1005C1440 1003 1434 965 1446 951Z" fill="#16388e" />
        <path d="M1511 911l24 15v9l-17 7v37l-7 3zM1546 936l20 9-20 20z" fill="#dcdfe0" />
        <path d="M1449 960l22-12v33c-10-3-17-8-22-21zM1521 944l22-9v35l-22 8z" fill="#1b459b" /><path d="M1482 922l25-14v75h-25z" fill="url(#tower)" />
      </svg>
      <div class="mtext"><strong>土木工程网</strong><span>www.civilcn.com</span></div>
    </div>
  </div>
</template>

<style>
body { background: #fff; }
</style>
<style scoped>
* { box-sizing: border-box; }
.app { position: relative; min-height: 100vh; padding-bottom: 2px; background: #fff; color: #ddd; font: 12px/18px "Noto Sans CJK SC", sans-serif; overflow: hidden; }
button, input, select { font: inherit; color: inherit; border: 0; padding: 0; margin: 0; background: none; border-radius: 0; min-width: 0; }
button { display: inline-flex; align-items: center; justify-content: center; flex: none; white-space: nowrap; }
select { appearance: none; }
svg { display: block; flex: none; }
h1, h2, p, ul { margin: 0; padding: 0; font: inherit; list-style: none; }
.caret { flex: none; width: 0; height: 0; border: 4px solid transparent; border-top-color: #333; border-bottom: 0; }
.caret.sm { border-width: 3px; border-bottom: 0; }
.head { display: flex; height: 45px; background: linear-gradient(#a2a2a2 24px, #9a9a9a 25px, #555); }
.logo { flex-wrap: wrap; align-content: center; width: 41px; height: 41px; background: linear-gradient(135deg, #b8b8b8, #8a8a8a); border: 1px solid #111; position: relative; color: #111; line-height: 11px; }
.logo b { width: 100%; font: 900 8px/9px "DejaVu Sans", sans-serif; padding-right: 2px; }
.logo .caret { position: absolute; right: 2px; top: 18px; }
.headrows { flex: 1; min-width: 0; }
.title { display: flex; height: 24px; background: #fff; border-bottom: 1px solid #555; color: #111; }
.qat { display: flex; align-items: center; width: 320px; background: linear-gradient(#8c8c8c, #a8a8a8); padding-left: 5px; border-right: 1px solid #666; }
.qat button { width: 24px; }
.qat .caret.sm { margin: 0 3px; opacity: .7; }
.ws { width: 129px; height: 21px; margin-left: 1px; padding-left: 4px; border: 1px solid #666; background: linear-gradient(to bottom right, #555 50%, transparent 51%) no-repeat right 4px center / 3px 3px, linear-gradient(to bottom left, #555 50%, transparent 51%) no-repeat right 7px center / 3px 3px, linear-gradient(#d2d2d2, #e8e8e8); }
.more { flex: none; margin-left: 4px; padding-top: 2px; border-top: 1px solid #333; line-height: 0; font-size: 0; }
.more .caret { display: block; }
.title h1 { flex: 1; display: flex; justify-content: center; gap: 27px; padding-right: 3px; line-height: 23px; white-space: nowrap; font-family: "Noto Sans", "Noto Sans CJK SC", sans-serif; }
.info { display: flex; align-items: center; width: 460px; background: linear-gradient(#8c8c8c, #a8a8a8); }
.info button { width: 24px; }
.info .expand { width: 14px; height: 23px; }
.expand i, .play i { border: 4px solid transparent; border-left: 5px solid #333; border-right: 0; }
.info input { width: 181px; height: 21px; background: #fff; border: 1px solid #111; padding-left: 3px; font-style: italic; color: #333; }
.info input::placeholder { color: #555; opacity: 1; }
.info .login { width: 54px; justify-content: flex-start; gap: 5px; padding-left: 3px; }
.login + .caret { margin-left: 52px; }
.info .ex { margin-left: 8px; }
.info .help { width: 17px; height: 17px; margin-left: 15px; border-radius: 50%; background: #f2f4fa; border: 1px solid #333; color: #1c3f9b; font-weight: 700; }
.help + .caret { margin-left: 6px; }
.winbtns { display: flex; width: 163px; padding-left: 24px; }
.winbtns button { width: 46px; }
.menubar { display: flex; height: 21px; padding-left: 2px; }
.mi { position: relative; display: flex; }
.mi > button { padding: 0 11px; height: 20px; line-height: 18px; color: #f2f2f2; border: 1px solid transparent; }
.mi > button.open { background: #555; border-color: #333; }
.mi.tight > button { padding: 0 6px 0 11px; }
.drop { position: absolute; z-index: 5; left: 0; top: 20px; width: 190px; padding: 3px; background: #f2f2f2; color: #000; border: 1px solid #ccc; border-top: 0; box-shadow: 2px 3px 4px rgba(0,0,0,.6); }
.sec + .sec::before { content: ""; display: block; height: 1px; margin: 3px 0 3px 28px; background: #cfcfcf; }
.sec button { display: flex; justify-content: space-between; width: 100%; height: 22px; padding: 0 9px 0 31px; }
.sec button:disabled { color: #777; }
.sec .hot { background: #90c8f6; }
.toolbar { height: 39px; background: #444; border-bottom: 1px solid #111; }
.tools { display: inline-flex; align-items: center; height: 38px; border-right: 1px solid #111; padding-right: 3px; }
.grip { flex: none; width: 5px; margin: 3px 0 3px 3px; align-self: stretch; border: 1px solid #111; border-width: 0 1px; }
.tb { width: 32px; height: 30px; }
.tb.on { width: 30px; margin: 0 1px; background: #5b86c4; border-radius: 2px; }
.sep { flex: none; width: 2px; height: 16px; margin: 0 2px; background: #1c1c1c; }
.gap { width: 179px; }
.dd, .modlist { background: #666 linear-gradient(to bottom right, #ddd 50%, transparent 51%) no-repeat right 6px top 7px / 4px 6px; background-image: linear-gradient(to bottom right, #ddd 50%, transparent 51%), linear-gradient(to bottom left, #ddd 50%, transparent 51%); background-position: right 6px top 7px, right 10px top 7px; }
.dd { align-self: flex-start; height: 20px; margin: 5px 0 0; padding: 0 4px; line-height: 16px; color: #ccc; }
.coord { width: 68px; margin: 5px 1px 0; }
.set { width: 118px; }
.ribbon { display: flex; height: 41px; background: #444; }
.ribbon .grip { width: 4px; }
.rrows { flex: 1; margin-left: 4px; min-width: 0; }
.rtabs { display: flex; align-items: center; height: 21px; background: #525252; border-top: 1px solid #666; border-bottom: 1px solid #2a2a2a; color: #aaa; }
.t1 { margin-left: 28px; } .t2 { margin-left: 36px; }
.t3 { margin-left: 207px; width: 54px; height: 20px; padding-left: 12px; background: linear-gradient(#666, #555); color: #ccc; border-right: 1px solid #2a2a2a; }
.pill { width: 14px; height: 8px; margin: 0 6px 0 22px; background: #eee; border-radius: 2px; }
.lt { border-width: 3px; border-bottom: 0; border-top-color: #aaa; }
.rbtns { display: flex; height: 20px; background: linear-gradient(#4a4a4a, #3a3a3a); border-bottom: 1px solid #2a2a2a; color: #ddd; }
.rbtns button { padding: 0 5px; height: 19px; border: 1px solid #5c5c5c; border-top: 0; margin-right: -1px; }
.main { display: flex; background: #444; padding-top: 2px; }
.strip { width: 40px; background: #333; display: flex; flex-direction: column; flex: none; }
.stub { height: 8px; border: 1px solid #222; border-width: 1px 1px 0; background: #484848; margin: 0 2px; }
.play { width: 19px; height: 19px; margin: auto 0 11px 10px; background: #4f4f4f; border-radius: 2px; }
.play i { border-left-color: #e4e4e4; }
.layout { display: grid; grid-template: 13px 13px / 14px 14px; gap: 1px; width: 36px; height: 44px; margin: 0 0 2px 4px; background: linear-gradient(#4f6ea6, #3a80d8); border-radius: 3px 0 0 3px; align-content: center; }
.layout i { background: #56637a; outline: 1px solid #26303f; width: 14px; height: 13px; }
.explorer { display: flex; flex-direction: column; flex: none; width: 189px; border: 1px solid #111; border-left-color: #333; }
.explorer nav { display: flex; gap: 20px; padding: 6px 0 0 16px; color: #eee; }
.find { height: 22px; margin: 7px 5px 4px; border: 1px solid #666; }
.exbody { display: flex; flex: 1; }
.filters { display: flex; flex-direction: column; width: 26px; padding: 2px 0 0 1px; }
.f { width: 22px; height: 20px; margin-bottom: 3px; }
.f.on { background: #5b86c4; }
.hr { width: 18px; height: 1px; margin: 1px 2px 3px; background: #888; }
.tree { flex: 1; border: 1px solid #3a3a3a; border-top: 0; margin-right: 4px; }
.tree h2 { height: 20px; line-height: 17px; padding-left: 1px; border: 1px solid #555; color: #eee; white-space: nowrap; overflow: hidden; }
.tree li { display: flex; align-items: center; height: 18px; padding-left: 18px; color: #eee; }
.tree li span { flex: 1; margin-left: 2px; padding-left: 3px; background: #7d7d7d; }
.wsrow { display: flex; align-items: center; gap: 5px; padding: 4px 0 5px 5px; color: #2f4390; }
.wsrow input { width: 145px; height: 23px; padding-left: 1px; border: 1px solid #666; color: #f2f200; }
.wsrow .caret { border-top-color: #000; border-width: 3px; border-bottom: 0; }
.wsrow span { margin: 0 0 16px 6px; line-height: 6px; }
.center { flex: 1; min-width: 0; display: flex; flex-direction: column; }
.views { display: grid; grid-template-columns: 1fr 1fr; gap: 5px 6px; padding: 0 4px 0 1px; background: #464646; }
.vp { position: relative; min-width: 0; background: #373737; }
.vp svg { width: 100%; height: auto; }
.lab { position: absolute; left: 5px; top: 4px; display: flex; gap: 7px; color: #ddd; font-size: 11px; }
.vp:nth-child(n + 3) .lab { top: 6px; }
.ax { font: 12px "DejaVu Sans", sans-serif; fill: #d8d020; }
.ax.b { fill: #0000c0; font-size: 11px; }
.tiny { font: 10px "Noto Sans", sans-serif; }
.tiny.g { fill: #00a000; } .tiny.b { fill: #0000c8; } .tiny.r { fill: #a00000; }
.cube { font: 16px "Noto Sans CJK SC", sans-serif; fill: #7b7d7e; text-anchor: middle; }
.slider { display: flex; gap: 2px; height: 19px; padding: 2px 0 1px 2px; }
.slider button { width: 14px; height: 16px; background: #5c5c5c; border-radius: 2px; color: #ccc; line-height: 14px; }
.slider .thumb { width: 123px; background: #666; }
.timeline { display: flex; }
.timeline button { width: 52px; padding-right: 7px; }
.timeline > svg { flex: 1; min-width: 0; height: auto; }
.num { font: 11px "Noto Sans", sans-serif; fill: #c4c4c4; text-anchor: middle; }
.panel { width: 200px; flex: none; padding-right: 5px; }
.ptabs { display: flex; height: 25px; }
.ptabs button { width: 32px; background: #3d3d3d; border-right: 1px solid #383838; }
.ptabs button.on { background: #444; }
.namerow { display: flex; gap: 6px; margin: 7px 2px 0 6px; height: 20px; }
.namerow input { flex: 1; height: 19px; background: #565656; color: #8a8a8a; padding-left: 3px; }
.namerow button { width: 16px; background: #d3f7f3; border: 1px solid #111; height: 20px; }
.modlist { display: block; width: 188px; height: 20px; margin: 10px 0 5px 6px; padding-left: 3px; color: #eee; }
.stack { height: 127px; margin: 0 0 0 6px; border: 1px solid #fff; outline: 1px solid #bbb; outline-offset: -2px; }
.stackbar { display: flex; align-items: center; height: 35px; padding-left: 5px; }
.stackbar button { width: 24px; height: 22px; }
.stackbar button.on { background: #48628f; width: 22px; }
.stackbar i { width: 1px; height: 16px; margin: 0 6px; background: #111; }
.roll { height: 1px; margin: 11px 6px 0 8px; background: #666; display: flex; justify-content: center; }
.roll i { width: 14px; height: 4px; margin-top: -1px; background: repeating-linear-gradient(90deg, #ddd 0 1px, #444 1px 2px); }
.status { display: flex; height: 50px; background: #444; white-space: nowrap; }
.listener { width: 105px; padding: 2px 5px 0 1px; border-right: 1px solid #111; }
.pink { height: 22px; background: #dcc3c6; border: 1px solid #999; border-right-color: #fff; border-bottom-color: #fff; }
.mono { height: 24px; background: #fff; border: 1px solid #999; color: #000; padding-left: 4px; line-height: 20px; overflow: hidden; white-space: pre; }
.mono span { font: 10px "Liberation Mono", monospace; }
.msgs { width: 922px; padding: 6px 0 0 4px; }
.msgs p { height: 25px; }
.xyz { padding-top: 5px; }
.xr { display: flex; align-items: center; height: 20px; }
.xr > button { width: 20px; margin-right: 7px; }
.xr label { display: flex; align-items: center; gap: 4px; margin-right: 12px; font-weight: 500; }
.xr label input { width: 57px; height: 17px; background: #666; }
.xr > button + label { margin-left: -2px; }
.gridsize { margin-left: 4px; }
.two { margin-top: 4px; padding-left: 307px; }
.xr.two button { width: 21px; height: 20px; margin-right: 5px; background: #5b86c4; border-radius: 3px; }
.taskbar { display: flex; height: 40px; background: linear-gradient(90deg, #18211f, #2c3122 20%, #33351f 40%, #343622 75%, #3c3522); }
.start { width: 48px; }
.tsearch { display: flex; align-items: center; width: 344px; padding-left: 12px; background: #f2f2f2; gap: 11px; color: #333; }
.tsearch input { flex: 1; font-size: 14px; }
.tsearch input::placeholder { color: #333; opacity: 1; }
.app-i { position: relative; width: 49px; height: 40px; }
.run { background: linear-gradient(#76b9ed, #76b9ed) no-repeat center bottom / 40px 2px; }
.cur { width: 48px; background: linear-gradient(#76b9ed, #76b9ed) no-repeat bottom / 48px 2px, #5c5f4d; }
.tile { padding: 2px; background: #e8eeee; }
.app-i em { position: absolute; right: 10px; bottom: 6px; width: 14px; height: 12px; border: 1px solid #1873b8; border-radius: 3px; background: linear-gradient(90deg, transparent 3px, #1873b8 3px 5px, transparent 5px 7px, #1873b8 7px 9px, transparent 9px) #bfe6fa; }
.mark { position: absolute; right: 0; bottom: 2px; display: flex; width: 528px; height: 262px; padding: 74px 0 0 48px; background: #fff; color: #0a0a0a; white-space: nowrap; }
.mtext { display: flex; flex-direction: column; font-style: italic; margin-left: -6px; }
.mtext strong { font-size: 58px; font-weight: 900; line-height: 54px; margin-top: 17px; }
.mtext span { padding-left: 4px; font: italic 600 38px/38px "Open Sans", sans-serif; }
</style>
